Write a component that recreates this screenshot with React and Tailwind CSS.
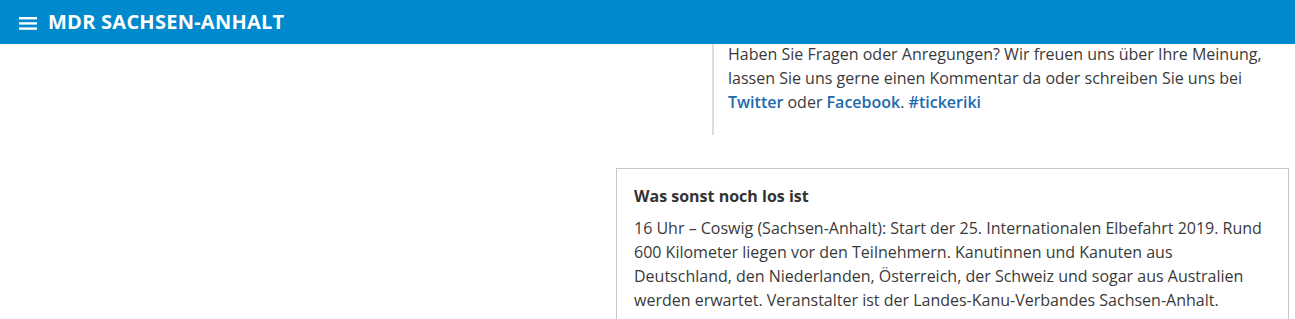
import React from 'react';

const Header = () => (
    <header className="relative z-10 h-[44px] bg-[#0089cd] flex items-center pl-[19px]">
        <svg width="18" height="14" viewBox="0 0 18 14" className="mt-[2px]">
            <rect x="0" y="1" width="18" height="2.4" fill="#fff" />
            <rect x="0" y="6.2" width="18" height="2.4" fill="#fff" />
            <rect x="0" y="11.4" width="18" height="2.4" fill="#fff" />
        </svg>
        <span className="ml-[11px] text-[20px] font-bold text-white tracking-[0.25px]">
            MDR SACHSEN-ANHALT
        </span>
    </header>
);

export default function App() {
    return (
        <div className="w-[1295px] h-[319px] overflow-hidden bg-white text-[16px] leading-6 text-[#3a3a3a]"
             style={{ fontFamily: '"Open Sans", "Noto Sans", sans-serif' }}>
            <Header />

            {/* Hinweis-Block mit Linie */}
            <div className="-mt-[2px] ml-[712px] w-[570px] border-l-2 border-[#dcdcdc] pl-[14px] pb-[21px]">
                <p>
                    Haben Sie Fragen oder Anregungen? Wir freuen uns über Ihre Meinung,
                    lassen Sie uns gerne einen Kommentar da oder schreiben Sie uns bei{' '}
                    <a className="font-semibold text-[#1d6aad]">Twitter</a> oder{' '}
                    <a className="font-semibold text-[#1d6aad]">Facebook</a>.{' '}
                    <a className="font-semibold text-[#1d6aad]">#tickeriki</a>
                </p>
            </div>

            {/* Kasten */}
            <div className="mt-[33px] ml-[616px] w-[673px] border border-[#c8c8c8] px-[17px] pt-[15px] pb-6">
                <h3 className="font-bold text-[#333]">Was sonst noch los ist</h3>
                <p className="mt-2">
                    16 Uhr – Coswig (Sachsen-Anhalt): Start der 25. Internationalen Elbefahrt 2019. Rund
                    600 Kilometer liegen vor den Teilnehmern. Kanutinnen und Kanuten aus
                    Deutschland, den Niederlanden, Österreich, der Schweiz und sogar aus Australien
                    werden erwartet. Veranstalter ist der Landes-Kanu-Verbandes Sachsen-Anhalt.
                </p>
            </div>
        </div>
    );
}
